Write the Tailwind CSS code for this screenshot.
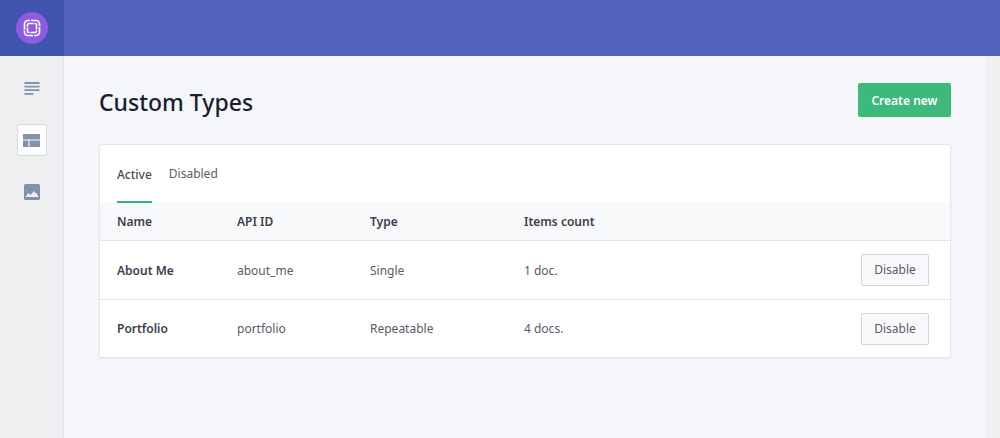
<!DOCTYPE html>
<html lang="en">
<head>
<meta charset="utf-8">
<meta name="viewport" content="width=device-width, initial-scale=1">
<title>Custom Types</title>
<script src="https://cdn.jsdelivr.net/npm/@tailwindcss/browser@4"></script>
</head>
<body class="flex min-h-screen flex-col bg-[#f4f6fa] font-['Noto_Sans',sans-serif] text-[12px] text-[#5b5a68]">
  <header class="flex h-14 bg-[#5163ba]">
    <a href="#" aria-label="Home" class="flex w-16 items-center justify-center bg-[#4054ad]">
      <svg class="size-8" viewBox="0 0 32 32" fill="none">
        <circle cx="16" cy="16" r="16" fill="#8e5be4"/>
        <g stroke="#fff" stroke-width="1.700">
          <path d="M8.500 17.500V12a3.500 3.500 0 0 1 3.500-3.500h2M15 8.500h5a3.500 3.500 0 0 1 3.500 3.500v2M23.500 15v5a3.500 3.500 0 0 1-3.500 3.500h-2M17 23.500h-5a3.500 3.500 0 0 1-3.500-3.500v-1.500"/>
          <path d="M11.500 14.500V13a1.500 1.500 0 0 1 1.500-1.500h4.500M18.500 11.500H19a1.500 1.500 0 0 1 1.500 1.500v4.500M20.500 18.500V19a1.500 1.500 0 0 1-1.500 1.500h-4.500M13.500 20.500H13a1.500 1.500 0 0 1-1.500-1.500v-3.500"/>
        </g>
      </svg>
    </a>
  </header>
  <div class="flex flex-1">
    <nav aria-label="Main" class="flex w-16 shrink-0 flex-col items-center gap-5 border-r border-[#dfe2e8] bg-[#eeeff1] pt-4 text-[#8292aa]">
      <a href="#" aria-label="Content" class="flex h-8 w-[30px] items-center justify-center">
        <svg class="size-4" viewBox="0 0 16 16" fill="none" stroke="currentColor" stroke-width="1.800"><path d="M.5 3h15M.5 6.600h15M.5 10.200h15M.5 13.800h9"/></svg>
      </a>
      <a href="#" aria-label="Custom types" aria-current="page" class="flex h-8 w-[30px] items-center justify-center rounded-xs border border-[#d5d9e2] bg-white">
        <svg class="h-[13px] w-[17px] shrink-0" viewBox="0 0 17 13" fill="currentColor"><path d="M0 0h17v5.500H0zM0 6.500h5.500V13H0zM6.500 6.500H17V13H6.500z"/></svg>
      </a>
      <a href="#" aria-label="Media" class="flex h-8 w-[30px] items-center justify-center">
        <svg class="size-4" viewBox="0 0 16 16"><rect width="16" height="16" rx="1.500" fill="currentColor"/><path d="M2 13V12l2.500-3 2 2L10 7l1.500 2.500 1-.8L14 12v1z" fill="#eeeff1"/></svg>
      </a>
    </nav>
    <main class="min-w-0 flex-1 px-[35px] pt-[27px] pb-8">
      <div class="flex items-center justify-between">
        <h1 class="pt-1 text-[23px] leading-[30px] font-medium text-[#1c1d2e]">Custom Types</h1>
        <button type="button" class="w-[93px] rounded-xs bg-[#3db97c] pt-[9px] pb-2 leading-[17px] font-semibold text-white">Create new</button>
      </div>
      <section class="mt-[27px] overflow-hidden rounded-xs border border-[#e3e5ea] bg-white shadow-xs">
        <div role="tablist" class="flex h-[58px] gap-[17px] px-[17px]">
          <button type="button" role="tab" aria-selected="true" class="border-b-2 border-[#2fb873] pt-1 font-medium text-[#4a4a58]">Active</button>
          <button type="button" role="tab" aria-selected="false" class="border-b-2 border-transparent pt-0.5">Disabled</button>
        </div>
        <table class="-mt-px w-full table-fixed text-left">
          <colgroup><col class="w-[137px]"><col class="w-[133px]"><col class="w-[154px]"><col></colgroup>
          <thead class="bg-[#f8f9fb] text-[#3d3d4c]">
            <tr class="h-[38px] border-b border-[#e3e5ea]">
              <th scope="col" class="pt-0.5 pl-[17px] font-semibold">Name</th>
              <th scope="col" class="pt-0.5 font-semibold">API ID</th>
              <th scope="col" class="pt-0.5 font-semibold">Type</th>
              <th scope="col" class="pt-0.5 font-semibold">Items count</th>
              <td class="w-28"></td>
            </tr>
          </thead>
          <tbody>
            <tr class="h-[59px] border-b border-[#e3e5ea]">
              <th scope="row" class="pt-0.5 pl-[17px] font-semibold text-[#3d3d4c]">About Me</th>
              <td class="pt-0.5">about_me</td><td class="pt-0.5">Single</td><td class="pt-0.5">1 doc.</td>
              <td class="pr-[21px] text-right"><button type="button" class="h-8 w-[68px] rounded-xs border border-[#d3d6e0] bg-[#f9f9fc]">Disable</button></td>
            </tr>
            <tr class="h-[58px]">
              <th scope="row" class="pt-0.5 pl-[17px] font-semibold text-[#3d3d4c]">Portfolio</th>
              <td class="pt-0.5">portfolio</td><td class="pt-0.5">Repeatable</td><td class="pt-0.5">4 docs.</td>
              <td class="pt-0.5 pr-[21px] text-right"><button type="button" class="h-8 w-[68px] rounded-xs border border-[#d3d6e0] bg-[#f9f9fc]">Disable</button></td>
            </tr>
          </tbody>
        </table>
      </section>
    </main>
    <div class="w-3.5 shrink-0 bg-[#f0f0f0]"></div>
  </div>
</body>
</html>
